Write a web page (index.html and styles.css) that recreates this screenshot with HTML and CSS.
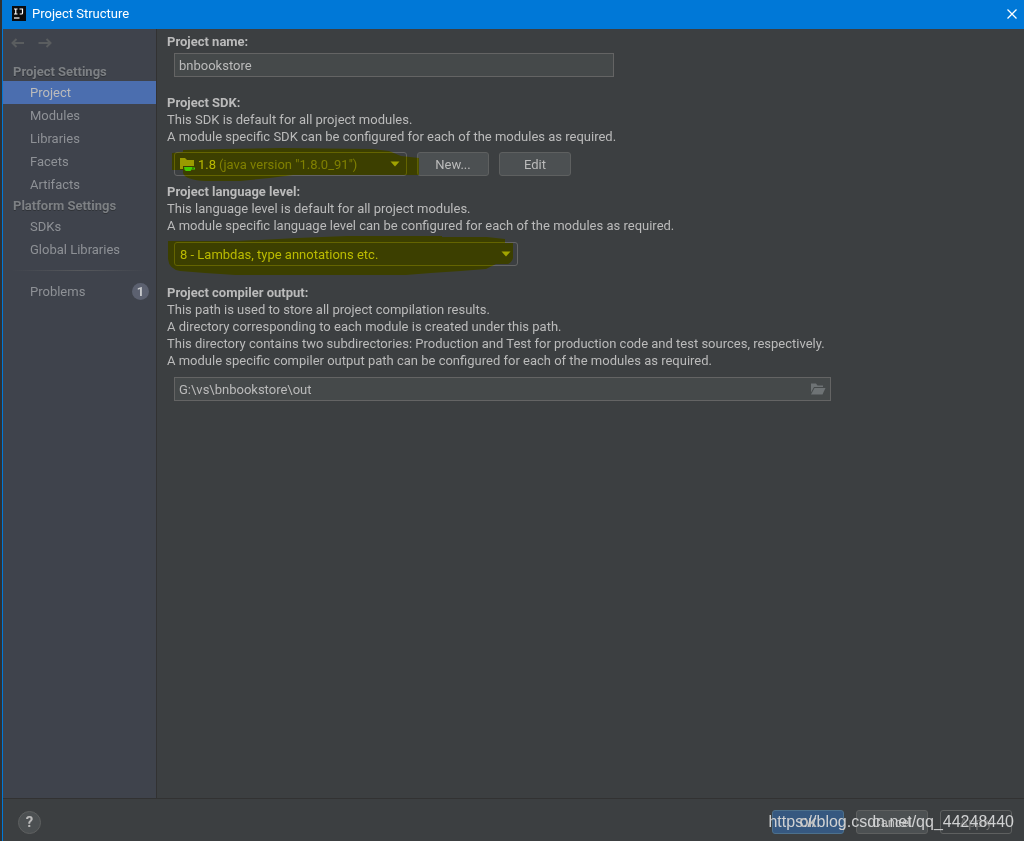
FILE: index.html
```html
<!DOCTYPE html>
<html lang="en">
<head>
<meta charset="utf-8">
<title>Project Structure</title>
<link rel="stylesheet" href="styles.css">
</head>
<body>
<div class="window">
  <header class="titlebar">
    <svg class="app-icon" width="16" height="16" viewBox="0 0 16 16" aria-hidden="true">
      <rect x="1" y="0" width="14" height="15" fill="#0b0b0d"/>
      <path d="M3 3h3.500M4.750 3v5M3 8h3.500M8.500 3h3v4q0 1-1 1H8.700" fill="none" stroke="#fff" stroke-width="1.2"/>
      <path d="M3 12h5.500" stroke="#fff" stroke-width="1.2"/>
    </svg>
    <h1 class="title">Project Structure</h1>
    <button class="close" aria-label="Close">
      <svg width="10" height="10" viewBox="0 0 10 10"><path d="M.5.5l9 9M9.500.5l-9 9" stroke="#fff" stroke-width="1.3"/></svg>
    </button>
  </header>

  <div class="body">
    <nav class="sidebar">
      <div class="history">
        <button class="arrow" aria-label="Back"><svg width="14" height="10" viewBox="0 0 14 10"><path d="M13 5H1.500M5.500 1l-4 4 4 4"/></svg></button>
        <button class="arrow" aria-label="Forward"><svg width="14" height="10" viewBox="0 0 14 10"><path d="M.5 5h12M8.500 1l4 4-4 4"/></svg></button>
      </div>
      <h2 class="group">Project Settings</h2>
      <a class="item selected" href="#project">Project</a>
      <a class="item" href="#modules">Modules</a>
      <a class="item" href="#libraries">Libraries</a>
      <a class="item" href="#facets">Facets</a>
      <a class="item" href="#artifacts">Artifacts</a>
      <h2 class="group">Platform Settings</h2>
      <a class="item" href="#sdks">SDKs</a>
      <a class="item" href="#global">Global Libraries</a>
      <div class="divider"></div>
      <a class="item" href="#problems">Problems<span class="count">1</span></a>
    </nav>

    <main class="content" id="project">
      <label class="heading" for="name">Project name:</label>
      <input class="field name" id="name" type="text" value="bnbookstore">

      <section class="section sdk">
        <label class="heading" for="sdk">Project SDK:</label>
        <p>This SDK is default for all project modules.</p>
        <p>A module specific SDK can be configured for each of the modules as required.</p>
        <div class="row">
          <div class="combo sdk-combo">
            <select id="sdk"><option>1.8</option></select>
            <svg class="folder" width="17" height="16" viewBox="0 0 17 16" aria-hidden="true">
              <path d="M1 1h5l2 2h7v6H4v3H1z" fill="#9a9b9c"/>
              <path d="M5 10h8v.5h3v2h-3.500l-1 1.500H7q-2-1-2-4z" fill="#44cc22"/>
              <path d="M13.200 11.500h1.500" stroke="#27590c" stroke-width=".8"/>
            </svg>
            <span class="version">(java version "1.8.0_91")</span>
            <svg class="caret" width="10" height="6" viewBox="0 0 10 6" aria-hidden="true"><path d="M.5.5h9L5 5.500z"/></svg>
          </div>
          <button class="button">New...</button>
          <button class="button">Edit</button>
          <svg class="marker marker-sdk" width="248" height="36" viewBox="0 0 248 36" aria-hidden="true">
            <path d="M0 5L11 4V2L50 1l60-1 90 1 17 2 12 5 18 2v17H121l-23 3-30 3H34q-21-1-23-8V22H0z"/>
          </svg>
        </div>
      </section>

      <section class="section">
        <label class="heading" for="level">Project language level:</label>
        <p>This language level is default for all project modules.</p>
        <p>A module specific language level can be configured for each of the modules as required.</p>
        <div class="row level-row">
          <div class="combo level-combo">
            <select id="level"><option>8 - Lambdas, type annotations etc.</option></select>
            <svg class="caret" width="10" height="6" viewBox="0 0 10 6" aria-hidden="true"><path d="M.5.5h9L5 5.500z"/></svg>
          </div>
          <svg class="marker marker-level" width="350" height="42" viewBox="0 0 350 42" aria-hidden="true">
            <path d="M1 5H70l60-3 50-2h95v1h45l18 2v4h8v15q-1 4-5 6h-12l-10 5-25 2-30 2-25 2H68l-30-2-25-2Q2 33 1 23z"/>
          </svg>
        </div>
      </section>

      <section class="section output">
        <label class="heading" for="out">Project compiler output:</label>
        <p>This path is used to store all project compilation results.</p>
        <p>A directory corresponding to each module is created under this path.</p>
        <p>This directory contains two subdirectories: Production and Test for production code and test sources, respectively.</p>
        <p>A module specific compiler output path can be configured for each of the modules as required.</p>
        <div class="path">
          <input class="field" id="out" type="text" value="G:\vs\bnbookstore\out">
          <button class="browse" aria-label="Browse"><svg width="16" height="12" viewBox="0 0 16 12"><path d="M1 .5h5l1.500 2H13V4H4L1 9.500z"/><path d="M4.500 5H15.500L12.500 11.500H1z"/></svg></button>
        </div>
      </section>
    </main>
  </div>

  <footer class="footer">
    <button class="help" aria-label="Help">?</button>
    <div class="actions">
      <button class="button primary">OK</button>
      <button class="button">Cancel</button>
      <button class="button disabled" disabled>Apply</button>
      <span class="watermark">https://blog.csdn.net/qq_44248440</span>
    </div>
  </footer>
</div>
</body>
</html>
```
FILE: styles.css
```css
* {
  box-sizing: border-box;
}

body {
  margin: 0;
  background: #2f3133;
  color: #bbbbbb;
  font: 13px/17px Roboto, "Noto Sans", sans-serif;
}

button,
input,
select {
  margin: 0;
  color: inherit;
  font: inherit;
}

h1,
h2,
p {
  margin: 0;
}

svg {
  display: block;
}

.window {
  display: flex;
  flex-direction: column;
  min-height: 100vh;
  margin-left: 2px;
  border-left: 1px solid #0078d7;
  background: #3c3f41;
}

.titlebar {
  display: flex;
  align-items: center;
  gap: 5px;
  height: 29px;
  padding: 0 7px 2px 8px;
  background: #0078d7;
}

.title {
  flex: 1;
  color: #ffffff;
  font-size: 13px;
  font-weight: 400;
}

.close,
.arrow,
.browse {
  padding: 0;
  border: 0;
  background: none;
}

.body {
  display: flex;
  flex: 1;
}

.sidebar {
  width: 154px;
  border-right: 1px solid #323232;
  background: #3f434c;
}

.history {
  display: flex;
  gap: 13px;
  height: 33px;
  padding: 9px 8px;
}

.arrow {
  height: 10px;
}

.arrow path {
  fill: none;
  stroke: #5a5d5f;
  stroke-width: 2;
}

.group {
  height: 19px;
  padding-left: 10px;
  color: #7d8084;
  font-size: 13px;
  font-weight: 700;
  line-height: 19px;
  text-shadow: 0 1px #303338;
}

.item {
  display: flex;
  align-items: center;
  justify-content: space-between;
  height: 23px;
  padding: 0 7px 0 27px;
  color: #8e9196;
  text-decoration: none;
}

.selected {
  background: #4b6eaf;
  color: #bbbbbb;
}

.divider {
  height: 1px;
  margin: 9px 8px;
  background: linear-gradient(90deg, transparent, #56585c, transparent);
}

.count {
  width: 17px;
  height: 17px;
  border-radius: 50%;
  background: #5c6170;
  color: #c8cacd;
  font-weight: 700;
  text-align: center;
}

.content {
  display: flex;
  flex: 1;
  flex-direction: column;
  padding: 4px 10px;
}

.heading {
  display: block;
  font-weight: 700;
}

.field {
  height: 24px;
  padding: 0 4px;
  border: 1px solid #646464;
  background: #45494a;
}

.name {
  width: 440px;
  margin: 3px 7px 0;
}

.section {
  margin-top: 7px;
}

.sdk {
  margin-top: 17px;
}

.output {
  margin-top: 18px;
}

.row {
  position: relative;
  display: flex;
  gap: 10px;
  margin: 7px 7px 0;
}

.level-row {
  margin-top: 8px;
}

.combo {
  position: relative;
  height: 24px;
}

.combo select {
  width: 100%;
  height: 24px;
  padding: 0 24px 0 5px;
  border: 1px solid #646464;
  border-radius: 3px;
  background: #3c3f41;
  appearance: none;
}

.sdk-combo {
  width: 233px;
}

.sdk-combo select {
  padding-left: 23px;
}

.level-combo {
  width: 344px;
}

.folder,
.version,
.caret {
  position: absolute;
  pointer-events: none;
}

.folder {
  top: 5px;
  left: 5px;
}

.version {
  top: 4px;
  left: 45px;
  color: #808080;
}

.caret {
  top: 9px;
  right: 7px;
  fill: #a2a4a6;
}

.marker {
  position: absolute;
  fill: #ffff00;
  mix-blend-mode: multiply;
  pointer-events: none;
}

.marker-sdk {
  top: -4px;
  left: -2px;
}

.marker-level {
  top: -6px;
  left: -7px;
}

.button {
  width: 72px;
  height: 24px;
  padding: 0;
  border: 1px solid #5e6060;
  border-radius: 3px;
  background: #4c5052;
}

.path {
  position: relative;
  display: flex;
  width: 657px;
  margin: 8px 7px 0;
}

.path .field {
  flex: 1;
  padding-right: 24px;
}

.browse {
  position: absolute;
  top: 6px;
  right: 5px;
  fill: #6e7375;
}

.footer {
  display: flex;
  align-items: center;
  justify-content: space-between;
  height: 43px;
  padding: 4px 12px 0 15px;
  border-top: 1px solid #323232;
}

.help {
  width: 23px;
  height: 23px;
  padding: 0;
  border: 1px solid #5e6060;
  border-radius: 50%;
  background: #4c5052;
  font-size: 15px;
  font-weight: 700;
}

.actions {
  position: relative;
  display: flex;
  gap: 12px;
}

.primary {
  border-color: #4c708c;
  background: #365880;
  font-weight: 700;
}

.disabled {
  background: none;
  color: #777777;
}

.watermark {
  position: absolute;
  top: 3px;
  right: -2px;
  color: #d0d1d2;
  font: 16px/18px "Liberation Sans", Arial, sans-serif;
  white-space: nowrap;
  pointer-events: none;
}
```
